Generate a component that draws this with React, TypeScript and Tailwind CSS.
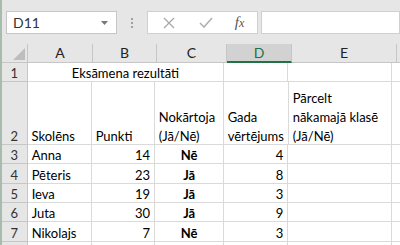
import React from "react";

const font = "font-['Lato','Liberation_Sans',sans-serif]";

const cols = ["A", "B", "C", "D", "E"];

const rows = [
  { n: 3, name: "Anna", pts: 14, pass: "Nē", grade: 4, h: "h-[19px]" },
  { n: 4, name: "Pēteris", pts: 23, pass: "Jā", grade: 8, h: "h-[20px]" },
  { n: 5, name: "Ieva", pts: 19, pass: "Jā", grade: 3, h: "h-[19px]" },
  { n: 6, name: "Juta", pts: 30, pass: "Jā", grade: 9, h: "h-[19px]" },
  { n: 7, name: "Nikolajs", pts: 7, pass: "Nē", grade: 3, h: "h-[20px]" },
];

const cell =
  "border-r border-b border-[#dadada] flex items-end px-[4px] leading-[19px] text-[13px] text-black";
const rowHead =
  "bg-[#e6e6e6] border-r border-b border-[#c6c6c6] flex items-end justify-center leading-[19px] text-[13px] text-[#333]";

function Row({ h, head, children }: { h: string; head?: React.ReactNode; children: React.ReactNode }) {
  return (
    <div className={`flex ${h}`}>
      <div className={`${rowHead} w-[26px]`}>
        <span className="translate-y-[2px]">{head}</span>
      </div>
      {children}
    </div>
  );
}

// text inside cells sits slightly low, like Excel's bottom alignment
const T = ({ children }: { children: React.ReactNode }) => (
  <span className="translate-y-[2px] whitespace-nowrap">{children}</span>
);

export default function App() {
  return (
    <div className={`w-[400px] h-[245px] overflow-hidden bg-white border-l-2 border-[#a7bcae] ${font}`}>
      {/* formula bar */}
      <div className="h-[44px] bg-[#e6e6e6] flex items-start pt-[11px]">
        <div className="ml-[4px] w-[111px] h-[23px] bg-white border border-[#c6c6c6] flex items-center justify-between pl-[6px] pr-[8px]">
          <span className="text-[14px] text-[#333]">D11</span>
          <svg width="7" height="4" viewBox="0 0 7 4">
            <path d="M0 0h7L3.5 4z" fill="#777" />
          </svg>
        </div>
        <div className="w-[30px] h-[23px] flex flex-col items-center justify-center gap-[2px]">
          <span className="w-[2px] h-[2px] bg-[#a0a0a0]" />
          <span className="w-[2px] h-[2px] bg-[#a0a0a0]" />
          <span className="w-[2px] h-[2px] bg-[#a0a0a0]" />
        </div>
        <div className="w-[111px] h-[23px] bg-white border border-[#d0d0d0] flex items-center">
          <div className="w-[34px] flex justify-center ml-[4px]">
            <svg width="12" height="12" viewBox="0 0 12 12">
              <path d="M1 1l10 10M11 1L1 11" stroke="#a8a8a8" strokeWidth="1.3" />
            </svg>
          </div>
          <div className="w-[40px] flex justify-center">
            <svg width="14" height="11" viewBox="0 0 14 11">
              <path d="M1 6l4 4 8-9" stroke="#b0b0b0" strokeWidth="1.6" fill="none" />
            </svg>
          </div>
          <div className="flex-1 flex justify-center pr-[4px]">
            <span className="font-['Liberation_Serif',serif] italic text-[15px] text-[#555] leading-none">
              f<span className="text-[12px]">x</span>
            </span>
          </div>
        </div>
        <div className="ml-[3px] flex-1 h-[23px] bg-white border border-[#d0d0d0]" />
      </div>

      {/* column headers */}
      <div className="flex h-[19px] bg-[#e6e6e6]">
        <div className="w-[26px] border-r border-b border-[#c6c6c6] relative">
          <svg className="absolute right-[2px] bottom-[2px]" width="12" height="12" viewBox="0 0 12 12">
            <path d="M12 0v12H0z" fill="#bdbdbd" />
          </svg>
        </div>
        {cols.map((c, i) => {
          const w = ["w-[65px]", "w-[64px]", "w-[70px]", "w-[65px]", "w-[105px]"][i];
          const sel = c === "D";
          return (
            <div
              key={c}
              className={`${w} flex items-center justify-center text-[14px] leading-none border-r ${
                sel
                  ? "bg-[#d2d2d2] text-[#217346] border-b-2 border-b-[#217346] border-r-[#c6c6c6]"
                  : "text-[#222] border-b border-[#c6c6c6]"
              }`}
            >
              {c}
            </div>
          );
        })}
        <div className="flex-1 border-b border-[#c6c6c6]" />
      </div>

      {/* row 1 */}
      <Row h="h-[19px]" head="1">
        <div className={`${cell} w-[199px] justify-center`}>
          <T>Eksāmena rezultāti</T>
        </div>
        <div className={`${cell} w-[65px]`} />
        <div className={`${cell} w-[105px]`} />
        <div className={`${cell} flex-1 border-r-0`} />
      </Row>

      {/* row 2 */}
      <Row h="h-[63px]" head="2">
        <div className={`${cell} w-[65px]`}>
          <T>Skolēns</T>
        </div>
        <div className={`${cell} w-[64px]`}>
          <T>Punkti</T>
        </div>
        <div className={`${cell} w-[70px]`}>
          <T>
            Nokārtoja
            <br />
            (Jā/Nē)
          </T>
        </div>
        <div className={`${cell} w-[65px]`}>
          <T>
            Gada
            <br />
            vērtējums
          </T>
        </div>
        <div className={`${cell} w-[105px]`}>
          <T>
            Pārcelt
            <br />
            nākamajā klasē
            <br />
            (Jā/Nē)
          </T>
        </div>
        <div className={`${cell} flex-1 border-r-0`} />
      </Row>

      {rows.map((r) => (
        <Row key={r.n} h={r.h} head={r.n}>
          <div className={`${cell} w-[65px]`}>
            <T>{r.name}</T>
          </div>
          <div className={`${cell} w-[64px] justify-end`}>
            <T>{r.pts}</T>
          </div>
          <div className={`${cell} w-[70px] justify-center font-bold`}>
            <T>{r.pass}</T>
          </div>
          <div className={`${cell} w-[65px] justify-end`}>
            <T>{r.grade}</T>
          </div>
          <div className={`${cell} w-[105px]`} />
          <div className={`${cell} flex-1 border-r-0`} />
        </Row>
      ))}

      {/* row 8, mostly below the fold */}
      <Row h="h-[20px]">
        <div className={`${cell} w-[65px]`} />
        <div className={`${cell} w-[64px]`} />
        <div className={`${cell} w-[70px]`} />
        <div className={`${cell} w-[65px]`} />
        <div className={`${cell} w-[105px]`} />
        <div className={`${cell} flex-1 border-r-0`} />
      </Row>
    </div>
  );
}
